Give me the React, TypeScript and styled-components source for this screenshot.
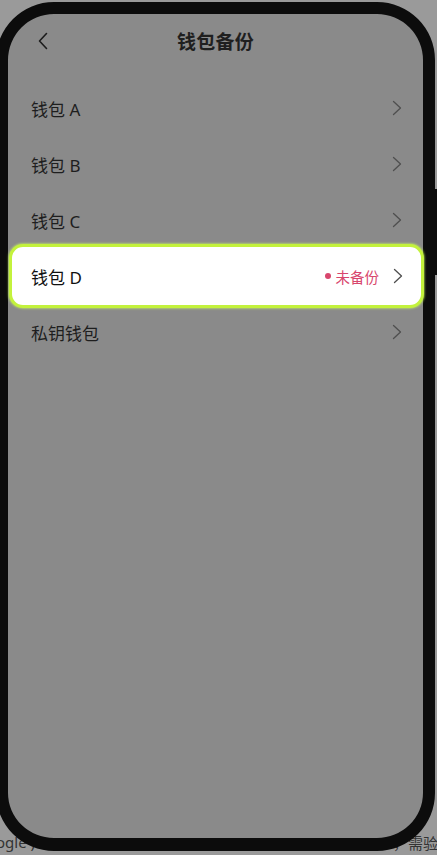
import React from 'react';
import styled, { createGlobalStyle } from 'styled-components';

type Wallet = {
    name: string;
    unbacked?: boolean;
};

const wallets: Wallet[] = [
    { name: '钱包 A' },
    { name: '钱包 B' },
    { name: '钱包 C' },
    { name: '钱包 D', unbacked: true },
    { name: '私钥钱包' },
];

const BackIcon = () => (
    <svg width="20" height="20" viewBox="0 0 20 20" fill="none">
        <polyline points="13.5,2.5 6.5,10 13.5,17.5" stroke="#1c1c1c" strokeWidth="1.6" strokeLinecap="round" strokeLinejoin="round" />
    </svg>
);

const ChevronIcon = () => (
    <svg width="10" height="16" viewBox="0 0 10 16" fill="none">
        <polyline points="1.5,1.5 8.5,8 1.5,14.5" stroke="#4f4f4f" strokeWidth="1.3" strokeLinecap="round" strokeLinejoin="round" />
    </svg>
);

const App: React.FC = () => {
    return (
        <Page>
            <GlobalStyle />
            <BehindLine>
                <LeftText>ogle )</LeftText>
                <RightText>，需验证</RightText>
            </BehindLine>
            <Phone>
                <SideButton />
                <Header>
                    <BackButton>
                        <BackIcon />
                    </BackButton>
                    <Title>钱包备份</Title>
                    <span />
                </Header>
                <List>
                    {wallets.map((w) => (
                        <Row key={w.name} $active={!!w.unbacked}>
                            <RowName $active={!!w.unbacked}>{w.name}</RowName>
                            {w.unbacked && (
                                <Status>
                                    <Dot />
                                    未备份
                                </Status>
                            )}
                            <ChevronIcon />
                        </Row>
                    ))}
                </List>
            </Phone>
        </Page>
    );
};

const GlobalStyle = createGlobalStyle`
    html, body {
        margin: 0;
        padding: 0;
        background: #9a9a9a;
    }
    body {
        font-family: 'Noto Sans', 'Noto Sans CJK SC', sans-serif;
        overflow: hidden;
    }
`;

const Page = styled.div`
    position: relative;
    width: 437px;
    height: 855px;
    overflow: hidden;
    display: flex;
    flex-direction: column;
    justify-content: flex-end;
`;

const BehindLine = styled.div`
    display: flex;
    justify-content: space-between;
    align-items: center;
    height: 24px;
    padding-bottom: 1px;
    font-size: 15px;
    color: #333;
    white-space: nowrap;
`;

const LeftText = styled.span`
    margin-left: -4px;
`;

const RightText = styled.span`
    margin-right: -16px;
`;

const Phone = styled.div`
    position: absolute;
    top: 2px;
    left: -4px;
    width: 439px;
    height: 849px;
    box-sizing: border-box;
    border: 12px solid #0c0c0c;
    border-bottom-width: 13px;
    border-radius: 58px;
    background: #8a8a8a;
    display: flex;
    flex-direction: column;
`;

const SideButton = styled.div`
    position: absolute;
    right: -14px;
    top: 175px;
    width: 2px;
    height: 86px;
    background: #0c0c0c;
`;

const Header = styled.div`
    display: grid;
    grid-template-columns: 1fr auto 1fr;
    align-items: center;
    height: 54px;
    padding: 0 23px;
`;

const BackButton = styled.div`
    display: flex;
    align-items: center;
    margin-left: 2px;
`;

const Title = styled.div`
    font-size: 19px;
    font-weight: 700;
    color: #1f1f1f;
    letter-spacing: 0.2px;
`;

const List = styled.div`
    display: flex;
    flex-direction: column;
    margin-top: 12px;
`;

const Row = styled.div<{ $active?: boolean }>`
    display: flex;
    align-items: center;
    box-sizing: border-box;
    height: ${(p) => (p.$active ? '64px' : '56px')};
    margin: ${(p) => (p.$active ? '-4px -1px -4px 1px' : '0')};
    padding: ${(p) => (p.$active ? '0 18px 0 19px' : '0 21px 0 23px')};
    background: ${(p) => (p.$active ? '#ffffff' : 'transparent')};
    border: ${(p) => (p.$active ? '3px solid #c3f23c' : 'none')};
    border-radius: 14px;
    box-shadow: ${(p) => (p.$active ? '0 0 2px 1px rgba(205, 255, 90, 0.55)' : 'none')};
`;

const RowName = styled.span<{ $active?: boolean }>`
    flex: 1;
    font-size: 17px;
    color: ${(p) => (p.$active ? '#111' : '#1e1e1e')};
`;

const Status = styled.span`
    display: flex;
    align-items: center;
    gap: 5px;
    margin-right: 14px;
    font-size: 14.5px;
    color: #d8466d;
`;

const Dot = styled.span`
    width: 6px;
    height: 6px;
    border-radius: 50%;
    background: #d8466d;
`;

export default App;
